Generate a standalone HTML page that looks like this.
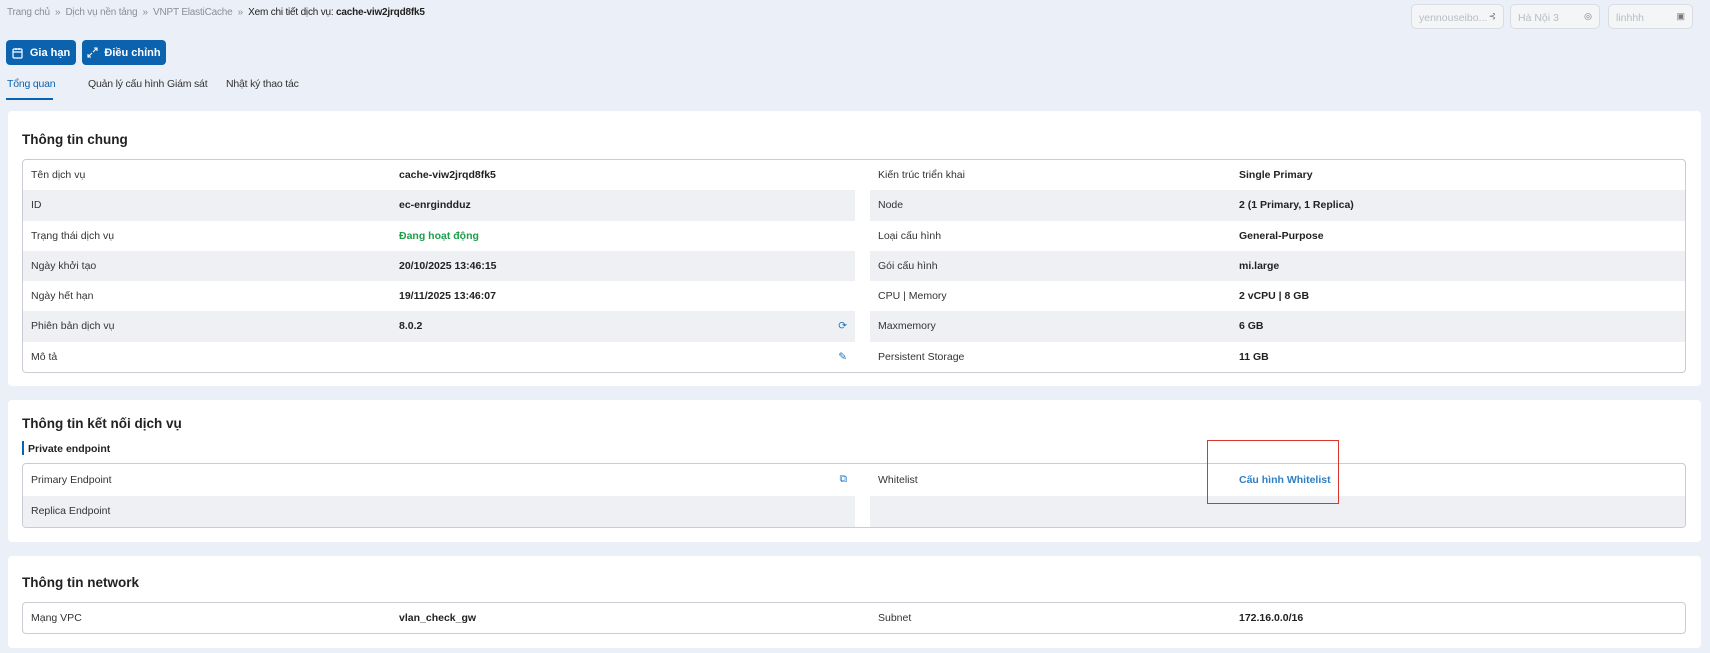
<!DOCTYPE html>
<html><head><meta charset="utf-8"><style>
*{box-sizing:border-box;margin:0;padding:0}
body{width:1710px;height:653px;background:#ebeff7;font-family:"Liberation Sans",sans-serif;font-size:10.5px;color:#333;position:relative;overflow:hidden}
.abs{position:absolute}
.bc{left:7px;top:7px;color:#8a8f99;font-size:10px;letter-spacing:-.2px}
.bc b{color:#222;font-weight:normal}
.btn{top:40px;height:25px;background:#0b63b0;color:#fff;border-radius:4px;font-weight:bold;font-size:11px;display:flex;align-items:center;justify-content:center;gap:6px}
.tab{top:78px;font-size:10.5px;color:#333;letter-spacing:-.2px}
.sel{top:4px;height:25px;border:1px solid #d9dce3;border-radius:5px;background:#f4f5f7;color:#b8bcc4;font-size:10.5px;padding:7px 7px}
.sel i{position:absolute;right:7px;top:6px;font-style:normal;color:#777;font-size:9px}
.card{left:8px;width:1693px;background:#fff;border-radius:4px}
.title{position:absolute;left:14px;font-size:13.5px;font-weight:bold;color:#222}
.tbl{position:absolute;left:14px;width:1664px;border:1px solid #c9ccd3;border-radius:4px;overflow:hidden}
.row{height:30.3px;position:relative}
.row .l,.row .r{position:absolute;top:0;height:100%}
.row .l{left:0;width:832px}
.row .r{left:847px;right:0}
.g .l,.g .r{background:#eff0f4}
.row span{position:absolute;top:9px}
.k{left:8px}.v{left:376px;font-weight:bold;color:#222}
.r .k{left:8px}.r .v{left:369px}
.ic{right:8px;top:7px;color:#1d6fb8}
</style></head><body>
<div class="abs bc">Trang chủ &nbsp;» &nbsp;Dịch vụ nền tảng &nbsp;» &nbsp;VNPT ElastiCache &nbsp;» &nbsp;<b>Xem chi tiết dịch vụ: <strong>cache-viw2jrqd8fk5</strong></b></div>
<div class="abs sel" style="left:1411px;width:93px">yennouseibo...<i>⊰</i></div>
<div class="abs sel" style="left:1510px;width:90px">Hà Nội 3<i>◎</i></div>
<div class="abs sel" style="left:1608px;width:85px">linhhh<i>▣</i></div>
<div class="abs btn" style="left:6px;width:70px"><svg width="12" height="12" viewBox="0 0 12 12" fill="none" stroke="#fff" stroke-width="1.2"><rect x="1" y="2" width="9" height="9" rx="1"/><path d="M1 5h9M4 1v2M7 1v2"/></svg>Gia hạn</div>
<div class="abs btn" style="left:82px;width:84px"><svg width="11" height="11" viewBox="0 0 11 11" fill="none" stroke="#fff" stroke-width="1.1"><path d="M6 5l4-4M7 1h3v3M5 6l-4 4M1 7v3h3"/></svg>Điều chỉnh</div>
<div class="abs tab" style="left:7px;color:#0b63b0">Tổng quan</div>
<div class="abs" style="left:6px;top:98px;width:47px;height:2px;background:#0b63b0"></div>
<div class="abs tab" style="left:88px">Quản lý cấu hình</div>
<div class="abs tab" style="left:167px">Giám sát</div>
<div class="abs tab" style="left:226px">Nhật ký thao tác</div>

<div class="abs card" style="top:111px;height:275px">
<div class="title" style="top:21px">Thông tin chung</div>
<div class="tbl" style="top:48px">
<div class="row"><div class="l"><span class="k">Tên dịch vụ</span><span class="v">cache-viw2jrqd8fk5</span></div><div class="r"><span class="k">Kiến trúc triển khai</span><span class="v">Single Primary</span></div></div>
<div class="row g"><div class="l"><span class="k">ID</span><span class="v">ec-enrgindduz</span></div><div class="r"><span class="k">Node</span><span class="v">2 (1 Primary, 1 Replica)</span></div></div>
<div class="row"><div class="l"><span class="k">Trạng thái dịch vụ</span><span class="v" style="color:#1e9e4a">Đang hoạt động</span></div><div class="r"><span class="k">Loại cấu hình</span><span class="v">General-Purpose</span></div></div>
<div class="row g"><div class="l"><span class="k">Ngày khởi tạo</span><span class="v">20/10/2025 13:46:15</span></div><div class="r"><span class="k">Gói cấu hình</span><span class="v">mi.large</span></div></div>
<div class="row"><div class="l"><span class="k">Ngày hết hạn</span><span class="v">19/11/2025 13:46:07</span></div><div class="r"><span class="k">CPU | Memory</span><span class="v">2 vCPU | 8 GB</span></div></div>
<div class="row g"><div class="l"><span class="k">Phiên bản dịch vụ</span><span class="v">8.0.2</span><span class="ic">⟳</span></div><div class="r"><span class="k">Maxmemory</span><span class="v">6 GB</span></div></div>
<div class="row"><div class="l"><span class="k">Mô tả</span><span class="ic">✎</span></div><div class="r"><span class="k">Persistent Storage</span><span class="v">11 GB</span></div></div>
</div></div>

<div class="abs card" style="top:400px;height:142px">
<div class="title" style="top:16px">Thông tin kết nối dịch vụ</div>
<div class="abs" style="left:14px;top:41px;width:2px;height:14px;background:#0b63b0"></div>
<div class="abs" style="left:20px;top:43px;font-weight:bold;font-size:10.5px;color:#222">Private endpoint</div>
<div class="tbl" style="top:63px">
<div class="row" style="height:32px"><div class="l"><span class="k" style="top:10px">Primary Endpoint</span><span class="ic">⧉</span></div><div class="r"><span class="k" style="top:10px">Whitelist</span><span class="v" style="top:10px;color:#2e7fc4">Cấu hình Whitelist</span></div></div>
<div class="row g" style="height:31px"><div class="l"><span class="k">Replica Endpoint</span></div><div class="r"></div></div>
</div></div>
<div class="abs" style="left:1207px;top:440px;width:132px;height:64px;border:1.5px solid #d9352b"></div>

<div class="abs card" style="top:556px;height:92px">
<div class="title" style="top:19px">Thông tin network</div>
<div class="tbl" style="top:46px">
<div class="row" style="height:30px"><div class="l"><span class="k">Mạng VPC</span><span class="v">vlan_check_gw</span></div><div class="r"><span class="k">Subnet</span><span class="v">172.16.0.0/16</span></div></div>
</div></div>
</body></html>
